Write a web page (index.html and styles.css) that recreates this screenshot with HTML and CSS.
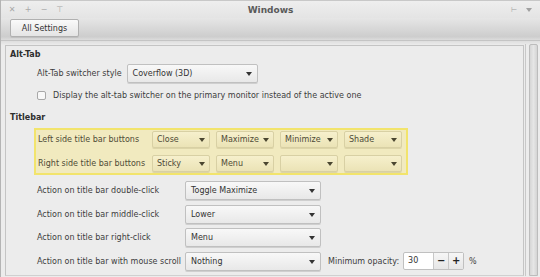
FILE: index.html
```html
<!DOCTYPE html>
<html lang="en">
  <head>
    <meta charset="UTF-8" />
    <title>Windows</title>
    <link rel="stylesheet" href="styles.css">
  </head>
  <body>
    <div class="window">
      <!-- Title bar -->
      <header class="titlebar">
        <div class="wm-buttons">
          <span>&#x2715;</span>
          <span>+</span>
          <span>&#x2212;</span>
          <span>&#x22A4;</span>
        </div>
        <div class="title">Windows</div>
        <div class="wm-right">
          <span class="pin">&#x22A2;</span>
          <span class="menu-arrow"></span>
        </div>
      </header>

      <!-- Toolbar -->
      <div class="toolbar">
        <button class="btn">All Settings</button>
      </div>

      <div class="content">
        <div class="frame">
          <h2>Alt-Tab</h2>
          <div class="row">
            <span class="label">Alt-Tab switcher style</span>
            <div class="select wide-alt">Coverflow (3D)</div>
          </div>
          <div class="row check-row">
            <span class="checkbox"></span>
            <span class="label">Display the alt-tab switcher on the primary monitor instead of the active one</span>
          </div>

          <h2>Titlebar</h2>
          <!-- highlighted group -->
          <div class="buttons-group">
            <div class="btn-row">
              <span class="label btn-label">Left side title bar buttons</span>
              <div class="select small">Close</div>
              <div class="select small">Maximize</div>
              <div class="select small">Minimize</div>
              <div class="select small">Shade</div>
            </div>
            <div class="btn-row">
              <span class="label btn-label">Right side title bar buttons</span>
              <div class="select small">Sticky</div>
              <div class="select small">Menu</div>
              <div class="select small"></div>
              <div class="select small"></div>
            </div>
          </div>

          <div class="action-row">
            <span class="label action-label">Action on title bar double-click</span>
            <div class="select action">Toggle Maximize</div>
          </div>
          <div class="action-row">
            <span class="label action-label">Action on title bar middle-click</span>
            <div class="select action">Lower</div>
          </div>
          <div class="action-row">
            <span class="label action-label">Action on title bar right-click</span>
            <div class="select action">Menu</div>
          </div>
          <div class="action-row">
            <span class="label action-label">Action on title bar with mouse scroll</span>
            <div class="select action">Nothing</div>
            <span class="label opacity-label">Minimum opacity:</span>
            <div class="spin">
              <span class="spin-value">30</span>
              <span class="spin-btn">&#x2212;</span>
              <span class="spin-btn">+</span>
            </div>
            <span class="label">%</span>
          </div>
        </div>
        <div class="scrollbar">
          <div class="trough"></div>
        </div>
      </div>
    </div>
  </body>
</html>
```

FILE: styles.css
```css
* {
  margin: 0;
  padding: 0;
  box-sizing: border-box;
}

body {
  width: 540px;
  height: 277px;
  overflow: hidden;
  font-family: "DejaVu Sans", sans-serif;
  font-size: 8px;
  color: #3c3c3c;
  background: #ececec;
}

.window {
  width: 540px;
  height: 277px;
  border-left: 1px solid #b4b4b4;
  display: flex;
  flex-direction: column;
}

/* Title bar */
.titlebar {
  height: 18px;
  flex-shrink: 0;
  display: flex;
  align-items: center;
  position: relative;
  background: linear-gradient(#eeeeee, #e4e4e4);
  border-top: 1px solid #c8c8c8;
}

.wm-buttons {
  display: flex;
  gap: 8px;
  padding-left: 7px;
  color: #a8a8a8;
  font-size: 8px;
}

.wm-buttons span {
  width: 8px;
  text-align: center;
}

.title {
  position: absolute;
  left: 0;
  right: 0;
  text-align: center;
  font-weight: bold;
  font-size: 9px;
  color: #5a5a5a;
}

.wm-right {
  margin-left: auto;
  display: flex;
  align-items: center;
  gap: 9px;
  padding-right: 8px;
  color: #a0a0a0;
  font-size: 7px;
}

.menu-arrow {
  width: 0;
  height: 0;
  border-left: 3px solid transparent;
  border-right: 3px solid transparent;
  border-top: 4px solid #a0a0a0;
}

/* Toolbar */
.toolbar {
  height: 23px;
  flex-shrink: 0;
  padding: 1px 0 0 9px;
  background: linear-gradient(#e6e6e6, #cdcdcd 85%, #dcdcdc);
  border-bottom: 1px solid #c4c4c4;
}

.btn {
  font-family: inherit;
  font-size: 8px;
  color: #333;
  height: 18px;
  width: 69px;
  border: 1px solid #b0b0b0;
  border-radius: 2px;
  background: linear-gradient(#fafafa, #e4e4e4);
  box-shadow: 0 1px 0 #c0c0c0;
}

/* Content */
.content {
  flex: 1;
  display: flex;
  padding: 4px 0 3px 4px;
  background: linear-gradient(#dedede, #e8e8e8 3px, #ececec 4px);
}

.frame {
  width: 520px;
  border: 1px solid #c4c4c4;
  border-bottom: 1px solid #d0d0d0;
  background: #ececec;
  padding: 3px 0 0 4px;
  overflow: hidden;
}

h2 {
  font-size: 8px;
  font-weight: bold;
  color: #2e2e2e;
  height: 11px;
  line-height: 11px;
}

.label {
  color: #3c3c3c;
  white-space: nowrap;
}

.row {
  display: flex;
  align-items: center;
  gap: 5px;
  padding-left: 27px;
  height: 21px;
  margin-top: 3px;
}

.check-row {
  height: 20px;
  gap: 7px;
  margin-top: 1px;
  margin-bottom: 7px;
}

.checkbox {
  width: 9px;
  height: 9px;
  border: 1px solid #a8a8a8;
  border-radius: 2px;
  background: #f8f8f8;
}

.select {
  position: relative;
  height: 19px;
  line-height: 17px;
  padding-left: 5px;
  border: 1px solid #c0c0c0;
  border-radius: 2px;
  background: linear-gradient(#f8f8f8, #e8e8e8);
  box-shadow: 0 1px 0 #cfcfcf;
  color: #333;
}

.select::after {
  content: "";
  position: absolute;
  right: 5px;
  top: 7px;
  border-left: 3px solid transparent;
  border-right: 3px solid transparent;
  border-top: 4px solid #333;
}

.wide-alt {
  width: 131px;
}

/* Title bar buttons group (highlighted) */
.buttons-group {
  margin: 5px 0 6px 24px;
  width: 374px;
  padding: 1px 0 1px 2px;
  display: flex;
  flex-direction: column;
  gap: 7px;
  border: 2px solid #f2e46c;
  background: #f1eabf;
}

.btn-row {
  display: flex;
  align-items: center;
  gap: 6px;
}

.btn-label {
  width: 108px;
  color: #4e4a36;
}

.select.small {
  width: 58px;
  height: 17px;
  line-height: 15px;
  padding-left: 4px;
  color: #4e4a36;
  border-color: #d8d0a4;
  background: linear-gradient(#f6f0cc, #ebe3b6);
  box-shadow: 0 1px 0 #ddd5a8;
}

.select.small::after {
  top: 6px;
  right: 4px;
  border-top-color: #4a4630;
}

/* Actions */
.action-row {
  display: flex;
  align-items: center;
  height: 19px;
  margin-bottom: 4.5px;
  padding-left: 27px;
}

.action-label {
  width: 148px;
}

.select.action {
  width: 136px;
}

.opacity-label {
  margin-left: 7px;
  margin-right: 4px;
}

.spin {
  display: flex;
  height: 18px;
  border: 1px solid #c0c0c0;
  border-radius: 2px;
  background: #fff;
  margin-right: 5px;
}

.spin-value {
  width: 29px;
  padding-left: 4px;
  line-height: 16px;
  color: #333;
}

.spin-btn {
  width: 15px;
  text-align: center;
  line-height: 16px;
  font-weight: bold;
  font-size: 10px;
  color: #222;
  border-left: 1px solid #c8c8c8;
  background: linear-gradient(#f6f6f6, #e6e6e6);
}

/* Scrollbar */
.scrollbar {
  width: 15px;
  margin-left: 1px;
  margin-top: -1px;
  padding: 0 2px 0 3px;
  border-left: 1px solid #c8c8c8;
}

.trough {
  height: 100%;
  border: 1px solid #bcbcbc;
  border-radius: 2px 2px 0 0;
  background: linear-gradient(90deg, #d6d6d6, #e6e6e6 50%, #d4d4d4);
}
```
